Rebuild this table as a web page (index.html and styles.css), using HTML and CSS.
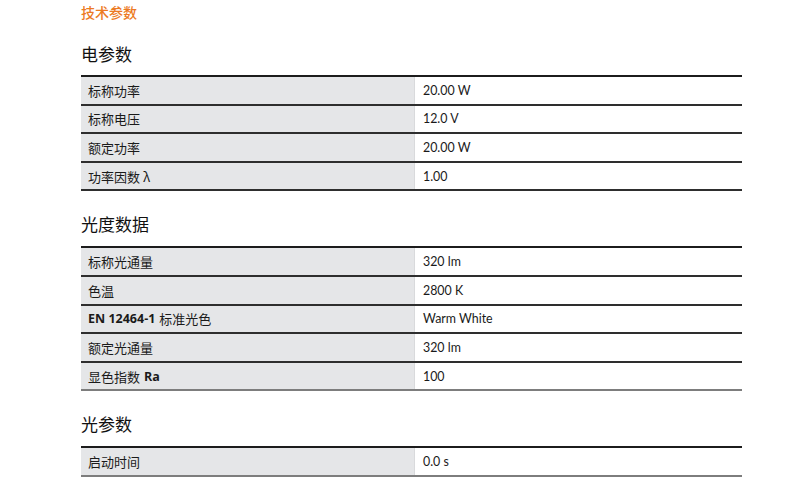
FILE: index.html
```html
<!DOCTYPE html>
<html lang="zh">
<head>
<meta charset="utf-8">
<link rel="stylesheet" href="styles.css">
</head>
<body>
<div class="page">
  <div class="title">技术参数</div>

  <h2 class="section">电参数</h2>
  <div class="table">
    <div class="row"><div class="label">标称功率</div><div class="value">20.00 W</div></div>
    <div class="row"><div class="label">标称电压</div><div class="value">12.0 V</div></div>
    <div class="row"><div class="label">额定功率</div><div class="value">20.00 W</div></div>
    <div class="row"><div class="label">功率因数 λ</div><div class="value">1.00</div></div>
  </div>

  <h2 class="section">光度数据</h2>
  <div class="table table-soft-end">
    <div class="row"><div class="label">标称光通量</div><div class="value">320 lm</div></div>
    <div class="row"><div class="label">色温</div><div class="value">2800 K</div></div>
    <div class="row"><div class="label"><b class="pre">EN 12464-1</b>标准光色</div><div class="value">Warm White</div></div>
    <div class="row"><div class="label">额定光通量</div><div class="value">320 lm</div></div>
    <div class="row"><div class="label">显色指数<b class="post">Ra</b></div><div class="value">100</div></div>
  </div>

  <h2 class="section">光参数</h2>
  <div class="table table-soft-end">
    <div class="row"><div class="label">启动时间</div><div class="value">0.0 s</div></div>
  </div>
</div>
</body>
</html>
```

FILE: styles.css
```css
html, body {
  margin: 0;
  padding: 0;
  background: #ffffff;
}
body {
  font-family: Lato, "Noto Sans CJK SC", sans-serif;
  color: #1a1a1a;
}
.page {
  width: 661px;
  margin-left: 81px;
  padding-top: 2px;
}
.title {
  color: #ec7a23;
  font-size: 14px;
  line-height: 20px;
  font-weight: 500;
  font-family: "Noto Sans CJK SC", sans-serif;
}
.section {
  margin: 0;
  font-weight: normal;
  font-size: 17px;
  line-height: 24px;
  font-family: "Noto Sans CJK SC", sans-serif;
  color: #111;
}
.title + .section {
  margin-top: 20px;
  margin-bottom: 9px;
}
.table + .section {
  margin-top: 21px;
  margin-bottom: 10px;
}
.table {
  border-top: 2px solid #1c1c1c;
}
.row {
  display: grid;
  grid-template-columns: 334px 1fr;
  height: 26.6px;
  border-bottom: 2px solid #2e2e2e;
}
.table-soft-end .row:last-child {
  border-bottom-color: #7d7d7d;
}
.label {
  background: #e5e6e8;
  padding-left: 7px;
  display: flex;
  align-items: center;
  font-size: 13px;
  font-family: "Noto Sans CJK SC", sans-serif;
  border-right: 1px solid #d9dadc;
}
.label b {
  font-family: "Open Sans", "Noto Sans CJK SC", sans-serif;
  font-weight: 700;
  font-size: 12.5px;
}
.label .pre {
  margin-right: 4px;
}
.label .post {
  margin-left: 4px;
}
.value {
  padding-left: 8px;
  display: flex;
  align-items: center;
  font-size: 12.4px;
}
```
